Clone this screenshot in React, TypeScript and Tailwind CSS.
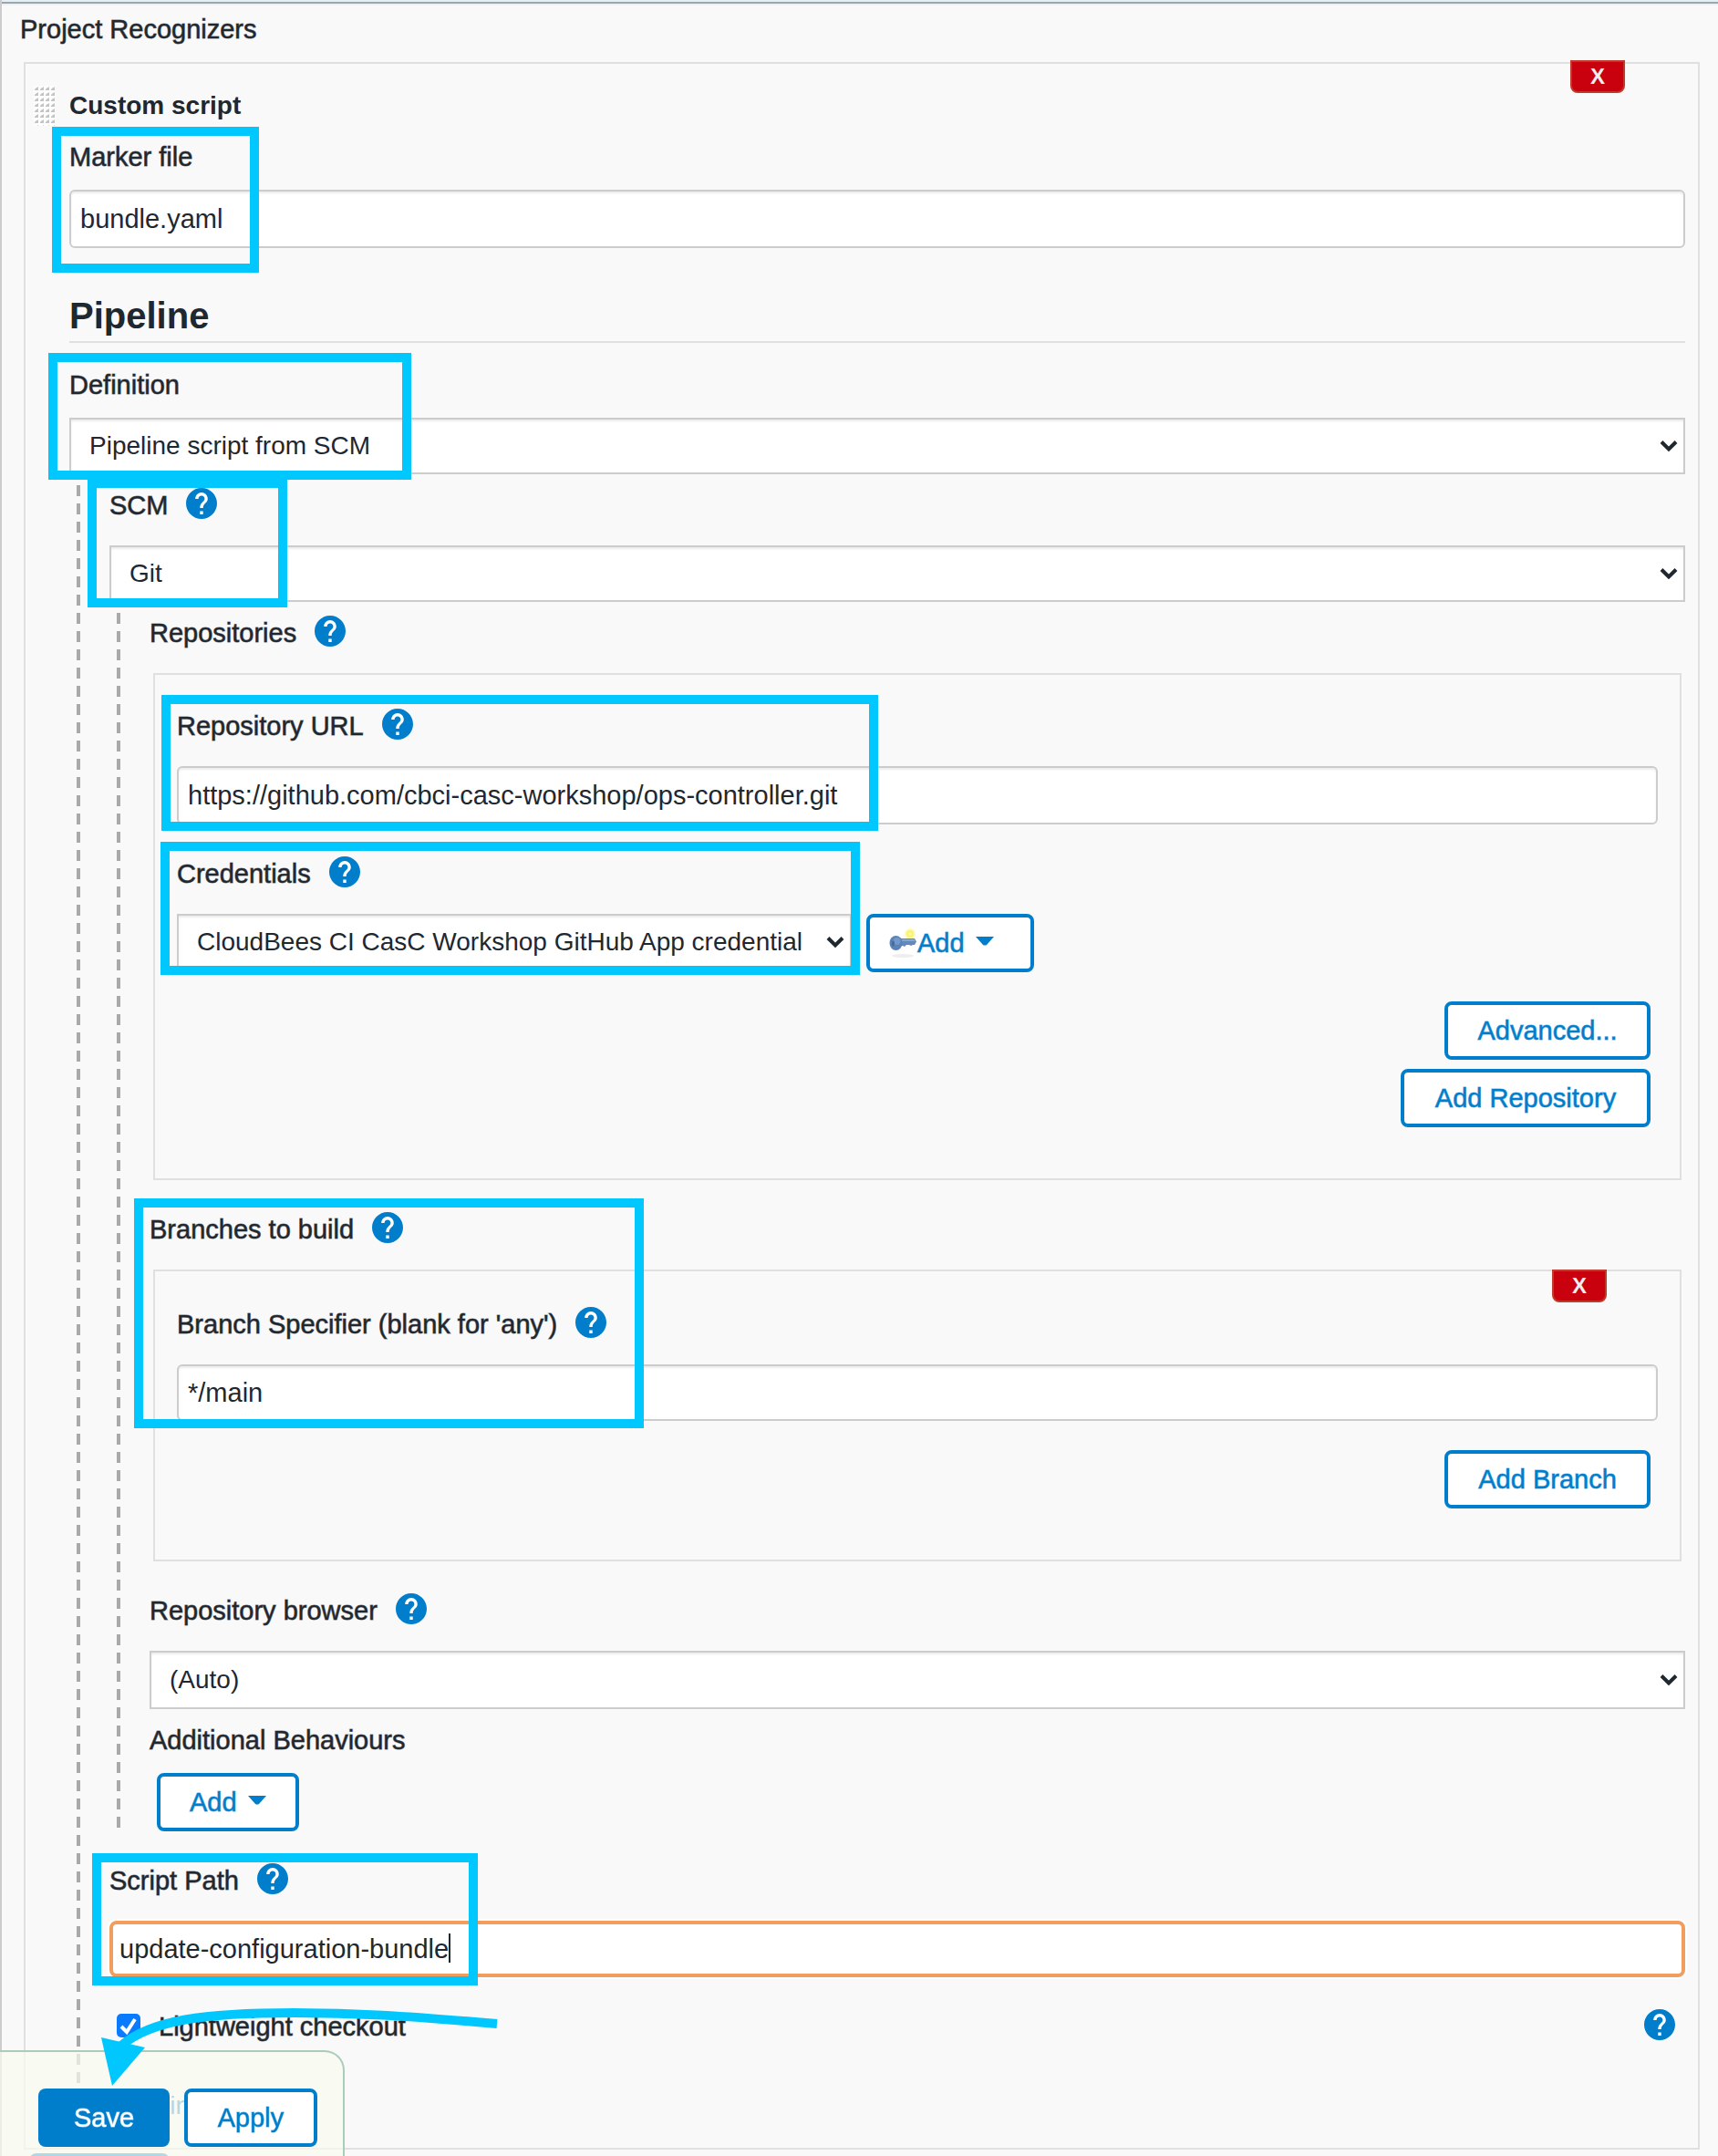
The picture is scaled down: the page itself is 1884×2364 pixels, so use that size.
import type { ReactNode } from "react";

const medium = "text-[29px] leading-[34px] [-webkit-text-stroke:1px_rgb(31_39_47/0.6)]";
const mediumBlue = "text-[29px] leading-[34px] [-webkit-text-stroke:1px_rgb(0_126_204/0.6)]";

function HelpButton({ topic }: { topic: string }) {
  return (
    <button type="button" aria-label={`Help for feature: ${topic}`} className="size-[34px] shrink-0 self-start text-[#007ecc]">
      <svg viewBox="2 2 20 20" className="block size-full" aria-hidden="true">
        <circle cx="12" cy="12" r="9" fill="#fff" />
        <path
          fill="currentColor"
          d="M12 2C6.48 2 2 6.48 2 12s4.48 10 10 10 10-4.48 10-10S17.52 2 12 2zm1 17h-2v-2h2v2zm2.07-7.75l-.9.92C13.45 12.9 13 13.5 13 15h-2v-.5c0-1.1.45-2.1 1.17-2.83l1.24-1.26c.37-.36.59-.86.59-1.41 0-1.1-.9-2-2-2s-2 .9-2 2H8c0-2.21 1.79-4 4-4s4 1.79 4 4c0 .88-.36 1.68-.93 2.25z"
        />
      </svg>
    </button>
  );
}

function Frame({ className }: { className: string }) {
  return <div aria-hidden="true" className={`pointer-events-none absolute z-10 border-[10px] border-[#00c8ff] ${className}`} />;
}

type FieldProps = {
  label: string;
  id?: string;
  help?: boolean;
  className?: string;
  frame?: string;
  children: ReactNode;
};

function Field({ label, id, help = false, className = "", frame, children }: FieldProps) {
  return (
    <div className={`relative ${className}`}>
      <div className={`flex h-9 items-end gap-5 ${help ? "mb-[27px]" : "mb-[19px]"}`}>
        {id ? (
          <label htmlFor={id} className={medium}>{label}</label>
        ) : (
          <span className={medium}>{label}</span>
        )}
        {help && <HelpButton topic={label} />}
      </div>
      {children}
      {frame && <Frame className={frame} />}
    </div>
  );
}

function TextInput({ id, value, className = "h-16" }: { id: string; value: string; className?: string }) {
  return (
    <input
      id={id}
      type="text"
      defaultValue={value}
      className={`block w-full rounded-[6px] border-2 border-[#ccc] bg-white px-[10px] text-[29px] shadow-[inset_0_2px_2px_rgba(0,0,0,0.08)] outline-none ${className}`}
    />
  );
}

function Select({ id, value, className = "h-[62px]" }: { id: string; value: string; className?: string }) {
  return (
    <div className="relative">
      <select
        id={id}
        defaultValue={value}
        className={`block w-full appearance-none border-2 border-[#ccc] bg-white pr-9 pl-5 text-[28px] shadow-[inset_0_2px_2px_rgba(0,0,0,0.08)] outline-none ${className}`}
      >
        <option>{value}</option>
      </select>
      <svg
        viewBox="0 0 20 14"
        className="pointer-events-none absolute top-1/2 right-2 h-[14px] w-5 -translate-y-1/2"
        fill="none"
        stroke="#1f272f"
        strokeWidth="4"
        aria-hidden="true"
      >
        <path d="M2 2.5 10 10.500 18 2.500" />
      </svg>
    </div>
  );
}

function OutlineButton({ children, className = "px-8", label }: { children?: ReactNode; className?: string; label?: string }) {
  return (
    <button
      type="button"
      aria-label={label}
      className={`flex h-16 items-center rounded-[8px] border-4 border-[#007ecc] bg-white text-[#007ecc] ${mediumBlue} ${className}`}
    >
      {children}
    </button>
  );
}

function Caret() {
  return (
    <svg viewBox="0 0 20 10" className="mb-1 ml-3 h-[10px] w-5" aria-hidden="true">
      <path d="M0 0H20L12 9Q10 10 8 9Z" fill="#007ecc" />
    </svg>
  );
}

function KeyIcon() {
  return (
    <svg viewBox="0 0 31 34" className="h-[34px] w-[31px]" aria-hidden="true">
      <ellipse cx="15" cy="31" rx="12" ry="2" fill="#eeeeee" />
      <circle cx="23" cy="7" r="6" fill="#fdfbb8" />
      <circle cx="23" cy="7" r="4" fill="#faf46e" />
      <circle cx="23" cy="7" r="1.500" fill="#fdfab8" />
      <path d="M10 12H28L30 15.500L28 19H26L24 20L22 19H19L17 21L15 20H10Z" fill="#6389ba" />
      <path d="M12 14H28" stroke="#8fb0d8" strokeWidth="1.500" />
      <ellipse cx="7.500" cy="17" rx="7" ry="8" fill="#5a82b6" />
      <ellipse cx="8.500" cy="15" rx="4" ry="4" fill="#7199cc" />
      <ellipse cx="4.500" cy="17.500" rx="1.500" ry="3" fill="#48699a" />
    </svg>
  );
}

function DeleteButton({ className }: { className: string }) {
  return (
    <button
      type="button"
      aria-label="Delete"
      className={`absolute right-20 h-9 w-[60px] rounded-b-[8px] border-2 border-[#c0392b] bg-[#c9000d] text-center text-[24px] leading-8 font-bold text-[#eee] ${className}`}
    >
      X
    </button>
  );
}

function Nested({ children, className = "" }: { children: ReactNode; className?: string }) {
  return (
    <div className="mt-3 ml-2 flex gap-8">
      <div className="w-1 shrink-0 bg-[repeating-linear-gradient(to_bottom,#a9a9a9_0_12px,transparent_12px_20px)]" />
      <div className={`min-w-0 flex-1 pt-[3px] ${className}`}>{children}</div>
    </div>
  );
}

function DragHandle() {
  return (
    <svg viewBox="0 0 23 44" className="mt-6 h-11 w-[23px]" aria-hidden="true">
      <defs>
        <pattern id="grip" width="6" height="6" patternUnits="userSpaceOnUse">
          <rect width="6" height="6" fill="#fdfdfd" />
          <path d="M5 1V5H1Z" fill="#b4b4b4" />
          <path d="M3 2H5V5H1V4Z" fill="#c4c4c4" />
        </pattern>
      </defs>
      <rect width="23" height="44" fill="url(#grip)" />
    </svg>
  );
}

export default function App() {
  return (
    <div className="h-screen overflow-y-auto border-l-2 border-[#ccc] bg-[#f9f9f9] font-['Liberation_Sans',Arial,sans-serif] text-[#1f272f] [scrollbar-width:none]">
      <div className="h-[6px] border-y-2 border-t-[#e6f0f4] border-b-[#eef1f3] bg-[#98a6b0]" />
      <main>
        <h1 className={`mt-[9px] ml-5 ${medium}`}>Project Recognizers</h1>

        <section className="relative mt-[19px] mr-5 ml-6 flex border-2 border-[#e0e0e0] pr-[14px]">
          <DeleteButton className="-top-1" />
          <div className="w-12 shrink-0 pl-[9px]">
            <DragHandle />
          </div>

          <div className="min-w-0 flex-1 pt-[29px] pb-[29px]">
            <h2 className="text-[28px] leading-[34px] font-bold">Custom script</h2>

            <Field label="Marker file" id="marker" className="mt-5" frame="-top-[14px] -left-[19px] h-[160px] w-[227px]">
              <TextInput id="marker" value="bundle.yaml" />
            </Field>

            <h2 className="mt-[50px] border-b-2 border-[#e0e0e0] pb-1 text-[40px] leading-[48px] font-bold">Pipeline</h2>

            <Field label="Definition" id="definition" className="mt-[27px]" frame="-top-4 -left-[23px] h-[139px] w-[398px]">
              <Select id="definition" value="Pipeline script from SCM" />
            </Field>

            <Nested className="pb-[53px]">
              <Field label="SCM" id="scm" help frame="-top-[10px] -left-6 h-[141px] w-[219px]">
                <Select id="scm" value="Git" />
              </Field>

              <Nested>
                <Field label="Repositories" help>
                  <div className="mx-1 border-2 border-[#e0e0e0] px-6 pt-[37px] pb-14">
                    <Field label="Repository URL" id="url" help frame="-top-[15px] -left-[17px] h-[149px] w-[786px]">
                      <TextInput id="url" value="https://github.com/cbci-casc-workshop/ops-controller.git" />
                    </Field>
                    <Field
                      label="Credentials"
                      id="credentials"
                      help
                      className="mt-[35px]"
                      frame="-top-4 -left-[18px] h-[146px] w-[767px]"
                    >
                      <div className="flex gap-4">
                        <div className="w-[740px]">
                          <Select id="credentials" value="CloudBees CI CasC Workshop GitHub App credential" />
                        </div>
                        <OutlineButton className="w-[184px] pl-[21px]">
                          <KeyIcon />
                          Add
                          <Caret />
                        </OutlineButton>
                      </div>
                    </Field>
                    <div className="mt-8 mr-2 flex flex-col items-end gap-[10px]">
                      <OutlineButton className="w-[226px] justify-center">Advanced...</OutlineButton>
                      <OutlineButton className="w-[274px] justify-center">Add Repository</OutlineButton>
                    </div>
                  </div>
                </Field>

                <Field label="Branches to build" help className="mt-[35px]" frame="-top-[15px] -left-[17px] h-[252px] w-[559px]">
                  <div className="relative mx-1 border-2 border-[#e0e0e0] px-6 pt-[39px] pb-14">
                    <DeleteButton className="-top-[2px]" />
                    <Field label="Branch Specifier (blank for 'any')" id="branch" help>
                      <TextInput id="branch" value="*/main" className="h-[62px]" />
                    </Field>
                    <div className="mt-8 mr-2 flex justify-end">
                      <OutlineButton className="w-[226px] justify-center">Add Branch</OutlineButton>
                    </div>
                  </div>
                </Field>

                <Field label="Repository browser" id="browser" help className="mt-[35px]">
                  <Select id="browser" value="(Auto)" className="h-16" />
                </Field>

                <Field label="Additional Behaviours" className="mt-[15px]">
                  <div className="ml-2 flex">
                    <OutlineButton>
                      Add
                      <Caret />
                    </OutlineButton>
                  </div>
                </Field>
              </Nested>

              <Field label="Script Path" id="script-path" help className="mt-[35px]" frame="-top-[11px] -left-[19px] h-[145px] w-[423px]">
                <div className="relative">
                  <input
                    id="script-path"
                    type="text"
                    defaultValue="update-configuration-bundle"
                    className="block h-[62px] w-full rounded-[8px] border-4 border-[#f09d5e] bg-white px-[7px] text-[29px] shadow-[0_0_0_2px_#fff] outline-none"
                  />
                  <span aria-hidden="true" className="absolute top-[14px] left-[372px] h-8 w-[2px] bg-[#1f272f]" />
                </div>
              </Field>

              <div className="mt-[35px] mr-[11px] flex h-9 items-end">
                <span className="relative mb-[5px] ml-2 size-[26px]">
                  <input
                    id="lightweight"
                    type="checkbox"
                    defaultChecked
                    className="block size-[26px] appearance-none rounded-[5px] bg-[#0a7aff]"
                  />
                  <svg viewBox="0 0 26 26" className="pointer-events-none absolute inset-0 size-full" aria-hidden="true">
                    <path d="M5 14 11 20 20 6" fill="none" stroke="#fff" strokeWidth="4" />
                  </svg>
                </span>
                <label htmlFor="lightweight" className={`ml-5 flex-1 ${medium}`}>
                  Lightweight checkout
                </label>
                <HelpButton topic="Lightweight checkout" />
              </div>
            </Nested>

            <a href="#pipeline-syntax" className="ml-12 block w-fit text-[28px] leading-[34px] text-[#007ecc]">
              Pipeline Syntax
            </a>
          </div>
        </section>

        <div className="mt-1 ml-[30px] flex">
          <OutlineButton label="Add project recognizer" className="w-[154px]" />
        </div>
      </main>

      <div className="fixed bottom-0 left-0 flex h-[116px] w-[378px] gap-4 rounded-tr-[22px] border-t-2 border-r-2 border-[#a9cdb9] bg-[#f8f9ef]/72 pt-10 pl-[42px]">
        <button
          type="button"
          className="h-16 w-36 rounded-[8px] bg-[#007ecc] text-[29px] leading-[34px] text-white [-webkit-text-stroke:1px_rgb(255_255_255/0.6)]"
        >
          Save
        </button>
        <OutlineButton className="w-[146px] justify-center">Apply</OutlineButton>
        <svg
          viewBox="100 2190 460 100"
          className="pointer-events-none absolute -top-[60px] left-[100px] h-[100px] w-[460px]"
          aria-hidden="true"
        >
          <path d="M545 2219C440 2210 390 2207 322 2207C225 2207 165 2215 133 2243" fill="none" stroke="#00c8ff" strokeWidth="10" />
          <path d="M111 2234 159 2245 123 2287Z" fill="#00c8ff" />
        </svg>
      </div>
    </div>
  );
}
